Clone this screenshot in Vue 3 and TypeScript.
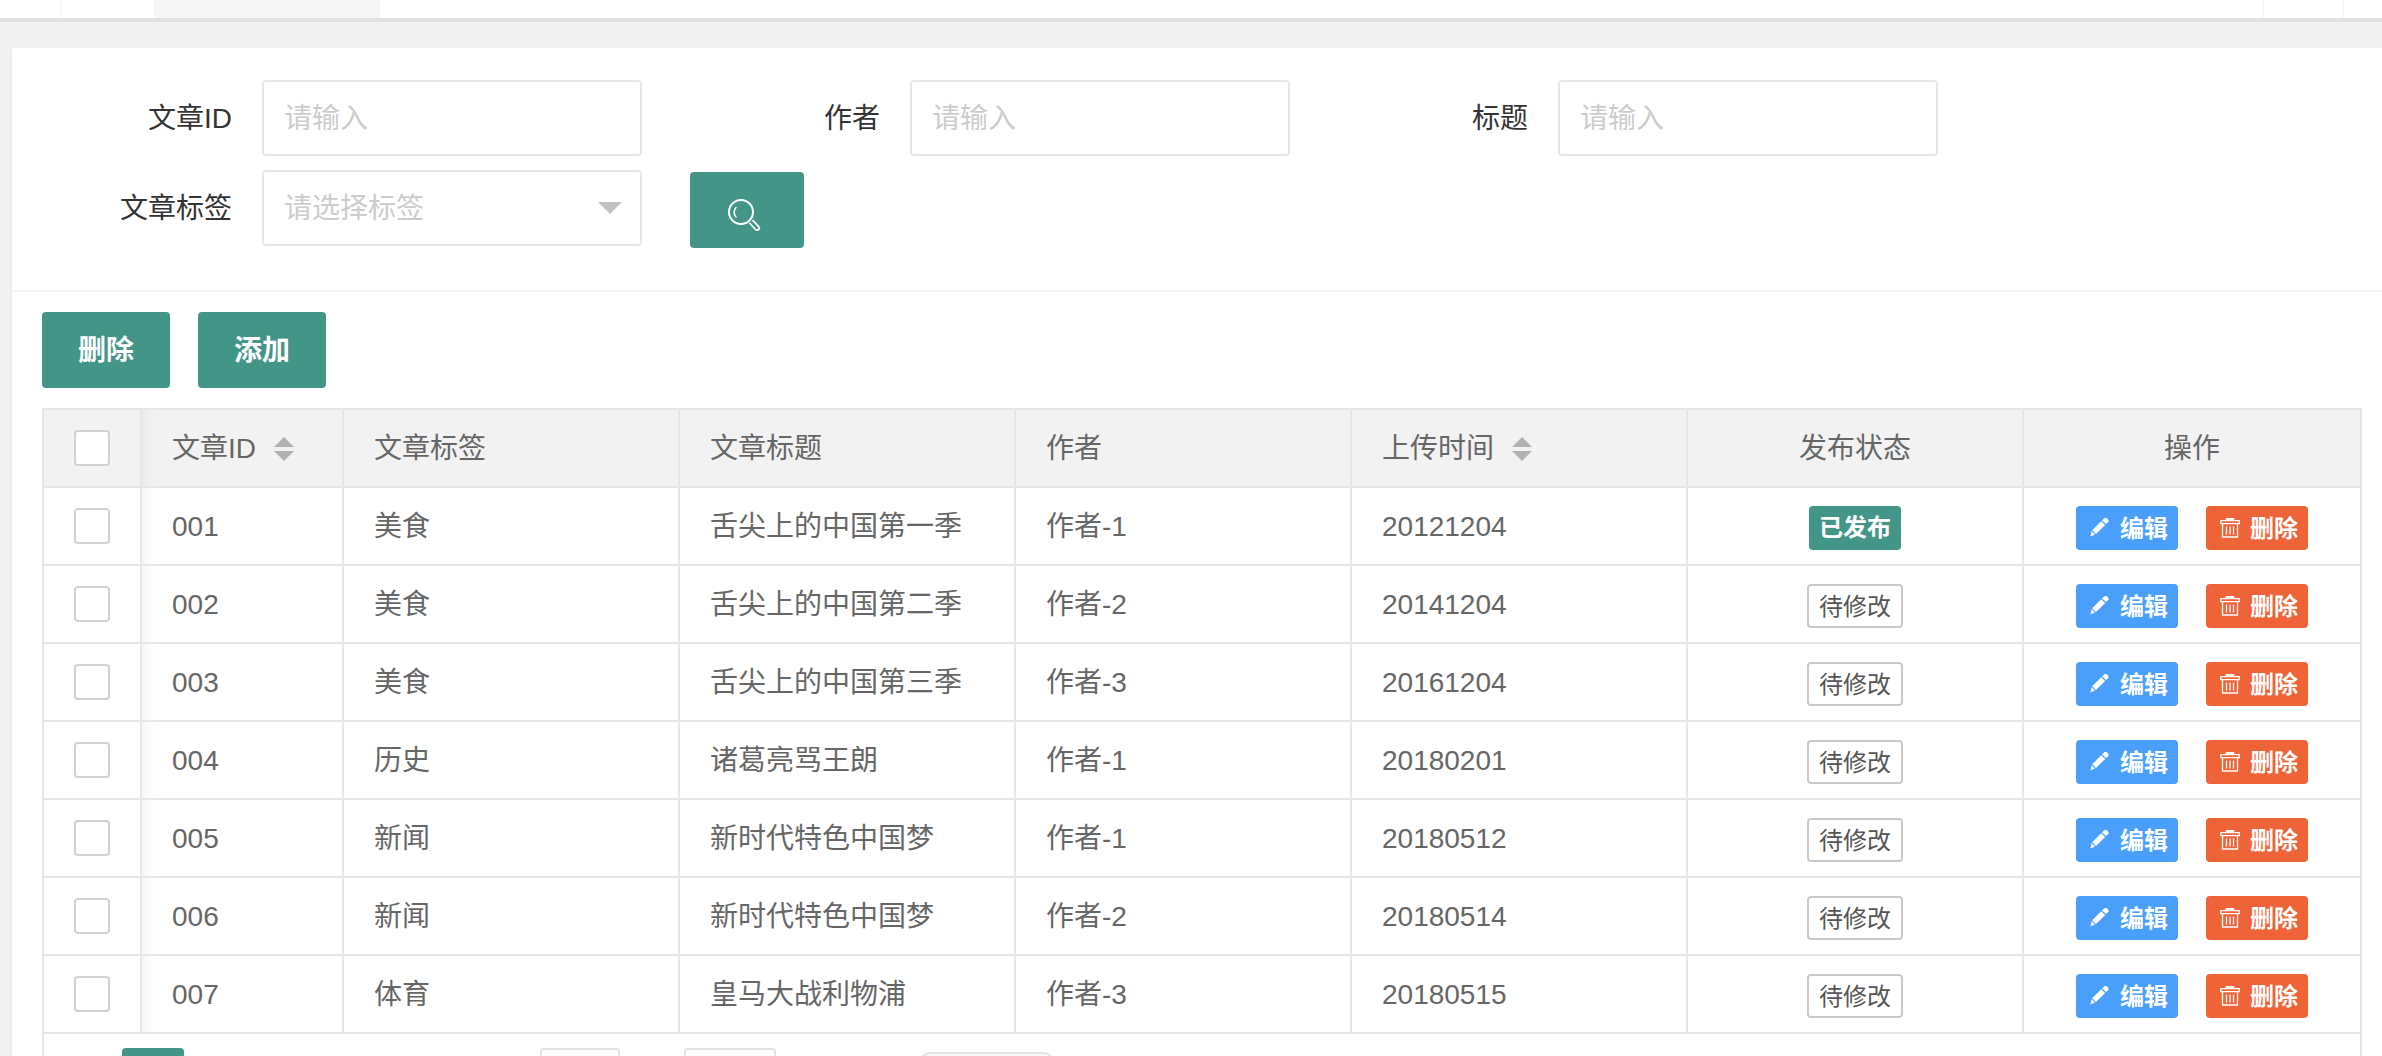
<script setup lang="ts">
import { computed, ref } from 'vue'

interface Article {
  id: string
  label: string
  title: string
  author: string
  uploadTime: string
  published: boolean
}

const articles: Article[] = [
  { id: '001', label: '美食', title: '舌尖上的中国第一季', author: '作者-1', uploadTime: '20121204', published: true },
  { id: '002', label: '美食', title: '舌尖上的中国第二季', author: '作者-2', uploadTime: '20141204', published: false },
  { id: '003', label: '美食', title: '舌尖上的中国第三季', author: '作者-3', uploadTime: '20161204', published: false },
  { id: '004', label: '历史', title: '诸葛亮骂王朗', author: '作者-1', uploadTime: '20180201', published: false },
  { id: '005', label: '新闻', title: '新时代特色中国梦', author: '作者-1', uploadTime: '20180512', published: false },
  { id: '006', label: '新闻', title: '新时代特色中国梦', author: '作者-2', uploadTime: '20180514', published: false },
  { id: '007', label: '体育', title: '皇马大战利物浦', author: '作者-3', uploadTime: '20180515', published: false },
]

const query = ref({ id: '', author: '', title: '', label: '' })
const selected = ref<string[]>([])
const allSelected = computed({
  get: () => selected.value.length === articles.length,
  set: (on: boolean) => {
    selected.value = on ? articles.map((a) => a.id) : []
  },
})
</script>

<template>
  <div class="app">
    <header class="tabs">
      <span class="tabs-control"></span>
      <span class="tabs-home"></span>
      <span class="tabs-active"></span>
      <span class="tabs-space"></span>
      <span class="tabs-next"></span>
      <span class="tabs-more"></span>
    </header>

    <main class="card">
      <form class="filters" @submit.prevent>
        <div class="filter-row">
          <div class="field">
            <label for="f-id">文章ID</label>
            <input id="f-id" v-model="query.id" class="box" type="text" placeholder="请输入" />
          </div>
          <div class="field">
            <label for="f-author">作者</label>
            <input id="f-author" v-model="query.author" class="box" type="text" placeholder="请输入" />
          </div>
          <div class="field">
            <label for="f-title">标题</label>
            <input id="f-title" v-model="query.title" class="box" type="text" placeholder="请输入" />
          </div>
        </div>
        <div class="filter-row">
          <div class="field">
            <label for="f-label">文章标签</label>
            <div class="select-wrap">
              <select id="f-label" v-model="query.label" class="box" :class="{ empty: !query.label }">
                <option value="">请选择标签</option>
                <option>美食</option>
                <option>新闻</option>
                <option>体育</option>
                <option>历史</option>
              </select>
              <i class="caret"></i>
            </div>
          </div>
          <div class="search">
            <button class="btn" type="submit" aria-label="搜索">
              <svg width="42" height="44" viewBox="-1 -9 42 44" fill="none" stroke="#fff" stroke-width="2" stroke-linecap="round" stroke-linejoin="round">
                <circle cx="14" cy="14" r="12" />
                <path d="M9 9.500a7 7 0 0 0 0 9.500" stroke-width="1.600" />
                <path d="M23 25.500l5.500 6a2 2 0 0 0 3.200-2.800l-5.700-6" stroke-width="1.700" />
              </svg>
            </button>
          </div>
        </div>
      </form>

      <section class="content">
        <div class="toolbar">
          <button class="btn" type="button">删除</button>
          <button class="btn" type="button">添加</button>
        </div>

        <div class="grid">
          <table>
            <colgroup>
              <col class="col-check" />
              <col class="col-id" />
              <col span="6" />
            </colgroup>
            <thead>
              <tr>
                <th class="center"><input v-model="allSelected" class="check" type="checkbox" aria-label="全选" /></th>
                <th class="edge">
                  <span class="sortable">文章ID<i class="sort"><i class="up"></i><i class="down"></i></i></span>
                </th>
                <th>文章标签</th>
                <th>文章标题</th>
                <th>作者</th>
                <th>
                  <span class="sortable">上传时间<i class="sort"><i class="up"></i><i class="down"></i></i></span>
                </th>
                <th class="center">发布状态</th>
                <th class="center">操作</th>
              </tr>
            </thead>
            <tbody>
              <tr v-for="a in articles" :key="a.id">
                <td class="center">
                  <input v-model="selected" class="check" type="checkbox" :value="a.id" :aria-label="a.id" />
                </td>
                <td class="edge">{{ a.id }}</td>
                <td>{{ a.label }}</td>
                <td>{{ a.title }}</td>
                <td>{{ a.author }}</td>
                <td>{{ a.uploadTime }}</td>
                <td>
                  <div class="actions">
                    <button v-if="a.published" class="mini done" type="button">已发布</button>
                    <button v-else class="mini pending" type="button">待修改</button>
                  </div>
                </td>
                <td>
                  <div class="actions">
                    <button class="mini edit" type="button">
                      <svg width="24" height="24" viewBox="0 0 24 24" fill="#fff">
                        <path d="M17.300 2.200a2.600 2.600 0 0 1 4.400-.2 2.600 2.600 0 0 1-.4 3.900l-1.300 1.200-4-3.700z" />
                        <path d="M15.200 4.200l4 3.700L10 17l-3.800-3.700z" />
                        <path d="M5.600 14.200l3.500 3.400L4.300 19.600z" />
                      </svg>
                      编辑
                    </button>
                    <button class="mini remove" type="button">
                      <svg width="24" height="24" viewBox="0 0 24 24" fill="none" stroke="#fff" stroke-width="1.300">
                        <path d="M10.700 3V2h6.600v1" stroke-width="2" />
                        <path d="M4.800 3.600h18.400v3H4.800z" />
                        <path d="M6.500 6.600v13.400h15V6.600" />
                        <path d="M10.500 9.500v8M14 9.500v8M17.500 9.500v8" />
                      </svg>
                      删除
                    </button>
                  </div>
                </td>
              </tr>
            </tbody>
          </table>

          <nav class="pager" aria-label="分页">
            <button class="page-current" type="button" aria-label="第1页"></button>
            <input class="page-input" type="text" aria-label="到第几页" />
            <button class="page-go" type="button" aria-label="确定"></button>
            <select class="page-size" aria-label="每页条数"></select>
          </nav>
        </div>
      </section>
    </main>
  </div>
</template>

<style>
html,
body {
  margin: 0;
  background: #f1f1f1;
}
</style>

<style scoped>
* {
  box-sizing: border-box;
}

.app {
  height: 100vh;
  overflow: hidden;
  font-family: "Liberation Sans", "Noto Sans CJK SC", sans-serif;
  font-size: 28px;
  line-height: 40px;
  color: #666;
}

button,
input,
select {
  margin: 0;
  font: inherit;
}

/* tab strip */
.tabs {
  display: flex;
  height: 22px;
  background: #fff;
  border-bottom: 4px solid #e1e1e1;
}

.tabs-control {
  width: 62px;
  border-right: 2px solid #f6f6f6;
}

.tabs-home {
  width: 92px;
}

.tabs-active {
  width: 226px;
  background: #f6f6f6;
}

.tabs-space {
  flex: 1;
}

.tabs-next {
  width: 80px;
  border-left: 2px solid #f6f6f6;
}

.tabs-more {
  width: 40px;
  border-left: 2px solid #f6f6f6;
}

/* card */
.card {
  margin: 26px 0 0 12px;
  background: #fff;
  box-shadow: 0 2px 4px rgba(0, 0, 0, 0.05);
}

.filters {
  display: flex;
  flex-direction: column;
  gap: 14px;
  padding: 32px 30px 42px;
  border-bottom: 2px solid #f6f6f6;
}

.filter-row {
  display: flex;
  align-items: flex-start;
  gap: 48px;
}

.field {
  display: flex;
  align-items: center;
}

.field label {
  width: 220px;
  padding: 2px 30px 0 0;
  text-align: right;
  color: #333;
}

.box {
  display: block;
  width: 380px;
  height: 76px;
  padding: 2px 20px 0;
  border: 2px solid #e6e6e6;
  border-radius: 4px;
  background: #fff;
  color: #333;
  outline: none;
  appearance: none;
}

.box::placeholder {
  color: #ccc;
  opacity: 1;
}

.box.empty {
  color: #ccc;
}

.select-wrap {
  position: relative;
}

.caret {
  position: absolute;
  top: 32px;
  right: 20px;
  border: 12px solid transparent;
  border-top-color: #c2c2c2;
  border-bottom-width: 0;
  pointer-events: none;
}

.search {
  padding-top: 2px;
}

.btn {
  display: flex;
  align-items: center;
  justify-content: center;
  height: 76px;
  padding: 2px 36px 0;
  border: 0;
  border-radius: 4px;
  background: #439588;
  color: #fff;
  font-weight: 700;
  cursor: pointer;
}

.content {
  padding: 20px 20px 30px 30px;
}

.toolbar {
  display: flex;
  gap: 28px;
  margin-bottom: 20px;
}

/* data grid */
.grid {
  border: 2px solid #e6e6e6;
}

table {
  width: 100%;
  table-layout: fixed;
  border-collapse: separate;
  border-spacing: 0;
}

.col-check {
  width: 98px;
}

.col-id {
  width: 202px;
}

th,
td {
  height: 78px;
  padding: 2px 30px 0;
  border-right: 2px solid #e6e6e6;
  border-bottom: 2px solid #e6e6e6;
  font-weight: 400;
  text-align: left;
  vertical-align: middle;
  white-space: nowrap;
}

th {
  background-color: #f2f2f2;
}

th:last-child,
td:last-child {
  border-right: 0;
}

.center {
  text-align: center;
}

.edge {
  background-image: linear-gradient(to right, rgba(0, 0, 0, 0.03), transparent 14px);
}

.check {
  display: block;
  width: 36px;
  height: 36px;
  margin: 0 auto;
  border: 2px solid #d2d2d2;
  border-radius: 4px;
  background: #fff;
  appearance: none;
}

.check:checked {
  background: #439588;
  border-color: #439588;
}

.center:first-child {
  padding: 0;
}

.sortable {
  display: flex;
  align-items: center;
  gap: 18px;
}

.sort {
  display: flex;
  flex-direction: column;
  gap: 4px;
}

.up,
.down {
  border: 10px solid transparent;
}

.up {
  border-top-width: 0;
  border-bottom-color: #b2b2b2;
}

.down {
  border-bottom-width: 0;
  border-top-color: #b2b2b2;
}

.actions {
  display: flex;
  justify-content: center;
  gap: 28px;
  padding-top: 2px;
}

.mini {
  display: flex;
  align-items: center;
  gap: 10px;
  height: 44px;
  padding: 2px 10px 0;
  border: 0;
  border-radius: 4px;
  color: #fff;
  font-size: 24px;
  font-weight: 700;
  line-height: 40px;
  cursor: pointer;
}

.done {
  padding-top: 0;
  background: #439588;
}

.pending {
  border: 2px solid #c9c9c9;
  background: #fff;
  color: #555;
  font-weight: 400;
  line-height: 36px;
}

.edit {
  background: #4a9ffb;
}

.remove {
  background: #ee6337;
}

/* pagination */
.pager {
  display: flex;
  padding: 14px 0 14px 78px;
}

.pager > * {
  height: 52px;
  padding: 0;
  border: 2px solid #e2e2e2;
  border-radius: 4px;
  background: #fff;
}

.pager .page-current {
  width: 62px;
  border: 0;
  background: #439588;
}

.page-input {
  width: 80px;
  margin-left: 356px;
}

.page-go {
  width: 92px;
  margin-left: 64px;
}

.pager .page-size {
  width: 134px;
  height: 44px;
  margin: 4px 0 0 144px;
  border-radius: 10px;
  background: #f8f8f8;
  appearance: none;
}
</style>
